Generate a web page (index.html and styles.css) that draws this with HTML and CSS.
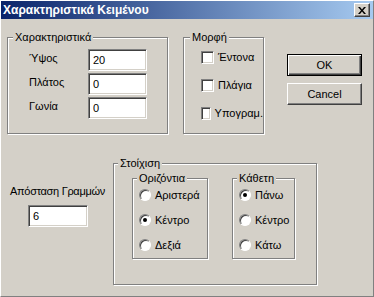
FILE: index.html
```html
<!DOCTYPE html>
<html lang="el">

<head>
    <meta charset="UTF-8">
    <title>Χαρακτηριστικά Κειμένου</title>
    <link rel="stylesheet" href="styles.css">
</head>

<body>
    <div class="window">
        <div class="titlebar">
            <span class="title">Χαρακτηριστικά Κειμένου</span>
            <button class="close">
                <svg width="8" height="7" viewBox="0 0 8 7">
                    <path d="M0 0h2l2 2.5 2-2.5h2l-3 3.5 3 3.5h-2l-2-2.5-2 2.5h-2l3-3.5z" fill="#000" />
                </svg>
            </button>
        </div>

        <div class="client">
            <div class="row-top">
                <fieldset class="group props">
                    <legend>Χαρακτηριστικά</legend>
                    <div class="group-body">
                        <div class="field">
                            <label>Ύψος</label>
                            <input class="edit" type="text" value="20">
                        </div>
                        <div class="field">
                            <label>Πλάτος</label>
                            <input class="edit" type="text" value="0">
                        </div>
                        <div class="field">
                            <label>Γωνία</label>
                            <input class="edit" type="text" value="0">
                        </div>
                    </div>
                </fieldset>

                <fieldset class="group format">
                    <legend>Μορφή</legend>
                    <div class="group-body">
                        <label class="check"><span class="box"></span>Έντονα</label>
                        <label class="check"><span class="box"></span>Πλάγια</label>
                        <label class="check"><span class="box"></span>Υπογραμ.</label>
                    </div>
                </fieldset>

                <div class="buttons">
                    <button class="btn btn-default">OK</button>
                    <button class="btn">Cancel</button>
                </div>
            </div>

            <div class="row-bottom">
                <div class="spacing">
                    <div class="spacing-label">Απόσταση Γραμμών</div>
                    <input class="edit edit-spacing" type="text" value="6">
                </div>

                <fieldset class="group align">
                    <legend>Στοίχιση</legend>
                    <div class="group-body">
                        <fieldset class="group sub sub-h">
                            <legend>Οριζόντια</legend>
                            <div class="group-body">
                                <label class="radio"><span class="dot"></span>Αριστερά</label>
                                <label class="radio"><span class="dot on"></span>Κέντρο</label>
                                <label class="radio"><span class="dot"></span>Δεξιά</label>
                            </div>
                        </fieldset>
                        <fieldset class="group sub sub-v">
                            <legend>Κάθετη</legend>
                            <div class="group-body">
                                <label class="radio"><span class="dot on"></span>Πάνω</label>
                                <label class="radio"><span class="dot"></span>Κέντρο</label>
                                <label class="radio"><span class="dot"></span>Κάτω</label>
                            </div>
                        </fieldset>
                    </div>
                </fieldset>
            </div>
        </div>
    </div>
</body>

</html>
```

FILE: styles.css
```css
* {
    margin: 0;
    padding: 0;
    box-sizing: border-box;
}

body {
    font-family: 'Liberation Sans', Arial, sans-serif;
    font-size: 11px;
    line-height: 13px;
    color: #000;
    background: #d4d0c8;
}

.window {
    width: 374px;
    height: 297px;
    background: #d4d0c8;
    border: 1px solid;
    border-color: #fff #808080 #808080 #fff;
}

/* title bar */
.titlebar {
    height: 18px;
    display: flex;
    align-items: center;
    padding-left: 2px;
    background: linear-gradient(90deg, #0a246a 0%, #a6caf0 100%);
}

.title {
    color: #fff;
    font-size: 12px;
    font-weight: bold;
}

.close {
    margin-left: auto;
    margin-right: 3px;
    width: 16px;
    height: 14px;
    display: flex;
    align-items: center;
    justify-content: center;
    background: #d4d0c8;
    border: 1px solid;
    border-color: #fff #404040 #404040 #fff;
    box-shadow: inset -1px -1px 0 #808080;
}

.client {
    padding: 12px 0 0 6px;
}

/* group boxes */
.group {
    border: 1px solid #808080;
    box-shadow: inset 1px 1px 0 #fff, 1px 1px 0 #fff;
    min-width: 0;
}

.group legend {
    margin-left: 5px;
    padding: 0 2px;
    background: #d4d0c8;
}

.row-top {
    display: flex;
    align-items: flex-start;
}

.props {
    width: 161px;
    height: 103px;
}

.props .group-body {
    padding: 5px 0 0 21px;
    display: flex;
    flex-direction: column;
    gap: 2px;
}

.field {
    display: flex;
    align-items: flex-start;
}

.field label {
    width: 59px;
    padding-top: 3px;
}

.edit {
    width: 59px;
    height: 22px;
    padding: 0 0 0 4px;
    font: inherit;
    color: #000;
    background: #fff;
    border: 1px solid;
    border-color: #808080 #fff #fff #808080;
    box-shadow: inset 1px 1px 0 #404040, inset -1px -1px 0 #d4d0c8;
    outline: none;
}

.format {
    width: 81px;
    height: 103px;
    margin-left: 15px;
}

.format legend {
    margin-left: 6px;
}

.format .group-body {
    padding: 7px 0 0 17px;
    display: flex;
    flex-direction: column;
    gap: 15px;
}

.check {
    display: flex;
    align-items: center;
    gap: 4px;
    height: 13px;
}

.box {
    width: 13px;
    height: 13px;
    background: #fff;
    border: 1px solid;
    border-color: #808080 #fff #fff #808080;
    box-shadow: inset 1px 1px 0 #404040, inset -1px -1px 0 #d4d0c8;
}

.buttons {
    margin: 23px 0 0 23px;
    display: flex;
    flex-direction: column;
    gap: 7px;
}

.btn {
    width: 75px;
    height: 22px;
    font: inherit;
    color: #000;
    background: #d4d0c8;
    border: 1px solid;
    border-color: #fff #404040 #404040 #fff;
    box-shadow: inset -1px -1px 0 #808080;
}

.btn-default {
    border-color: #000;
    box-shadow: inset 1px 1px 0 #fff, inset -1px -1px 0 #404040, inset -2px -2px 0 #808080;
}

/* bottom row */
.row-bottom {
    display: flex;
    align-items: flex-start;
    margin-top: 23px;
}

.spacing {
    width: 103px;
    margin: 28px 0 0 3px;
    flex-shrink: 0;
}

.spacing-label {
    margin-bottom: 7px;
    letter-spacing: -0.3px;
}

.edit-spacing {
    width: 60px;
    margin-left: 18px;
}

.align {
    width: 204px;
    height: 128px;
}

.align legend {
    margin-left: 4px;
}

.align > .group-body {
    padding: 2px 0 0 18px;
    display: flex;
    align-items: flex-start;
    gap: 24px;
}

.sub {
    height: 87px;
}

.sub .group-body {
    padding: 4px 0 0 6px;
    display: flex;
    flex-direction: column;
    gap: 13px;
}

.sub-h {
    width: 76px;
}

.sub-v {
    width: 63px;
}

.radio {
    display: flex;
    align-items: center;
    gap: 4px;
    height: 12px;
}

.dot {
    width: 12px;
    height: 12px;
    border-radius: 50%;
    background: #fff;
    border: 1px solid;
    border-color: #808080 #fff #fff #808080;
    box-shadow: inset 1px 1px 0 #404040;
    display: flex;
    align-items: center;
    justify-content: center;
}

.dot.on::after {
    content: '';
    width: 4px;
    height: 4px;
    border-radius: 50%;
    background: #000;
}
```
